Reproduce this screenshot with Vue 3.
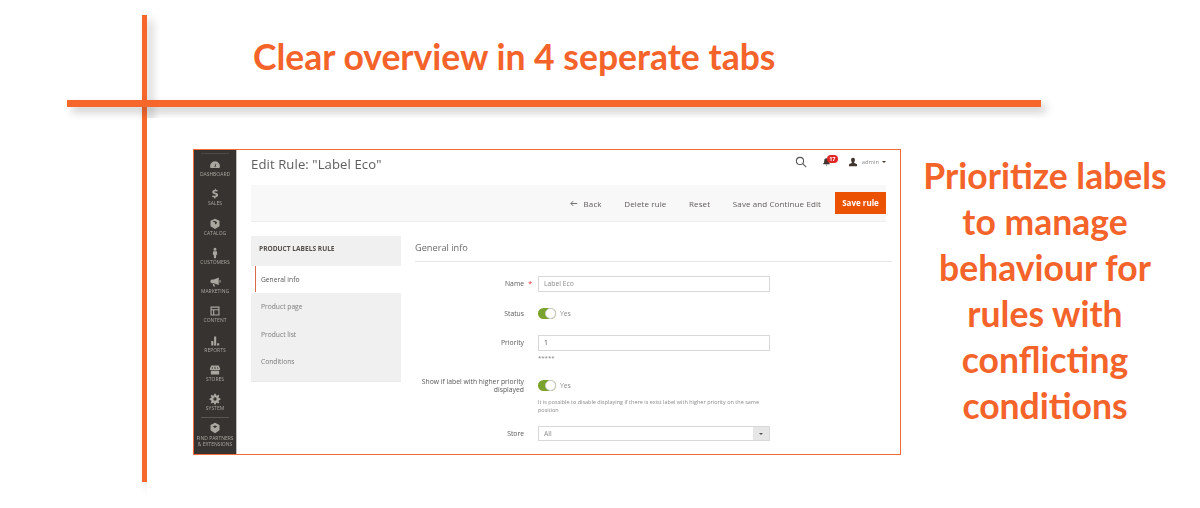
<script setup>
const nav = [
  { label: 'Dashboard', icon: 'M2 12a6.500 6.500 0 1 1 12 0zM7.200 10.500l1.800-4.500.6.500-1 4.600z' },
  { label: 'Sales', icon: 'M8 1v1.400c-2.400.2-3.600 1.400-3.600 3 0 3.600 5 2.400 5 4 0 .7-.7 1-1.800 1-1 0-2-.3-2.800-.8l-.6 2c.8.5 1.800.8 2.800.9V14h1.600v-1.500c2.300-.3 3.500-1.500 3.500-3.200 0-3.600-5-2.500-5-4 0-.6.6-.9 1.500-.9.900 0 1.700.2 2.400.6l.6-2c-.7-.4-1.500-.6-2.500-.7V1z' },
  { label: 'Catalog', icon: 'M8 1l6 2.500V11l-6 3.500L2 11V3.500zM4.500 4.200L8 6v2.500L10.500 7V5.300L7 3.500z' },
  { label: 'Customers', icon: 'M8 1a2 2 0 1 1 0 4 2 2 0 0 1 0-4zM5.500 5.800h5l.5 4.200-1.300.3-.4 4.700H6.700l-.4-4.700L5 10z' },
  { label: 'Marketing', icon: 'M13 2v10L6.500 9.800H3.500L2 8.500V6l1.500-1.500h3zM14 5.500h1.500v3H14zM5 10.500h2l1 3.500H6z' },
  { label: 'Content', icon: 'M2 2h12v12H2zM3.500 3.500v2h9v-2zM3.500 7v5.500h2V7zM7 7v5.500h5.500V7z' },
  { label: 'Reports', icon: 'M3 8h2.800v6H3zM6.800 2h2.800v12H6.800zM10.800 11h2.800v3h-2.800z' },
  { label: 'Stores', icon: 'M3 2h10l2 4.500c0 1-1 1.500-1.800 1.500H2.800C2 8 1 7.500 1 6.500zM2.500 9h11v5h-11zM4.500 3.500l-1 3h1l.7-3zM7.500 3.500l-.2 3h1.400l-.2-3zM10.800 3.500l.7 3h1l-1-3z' },
  { label: 'System', icon: 'M7 1h2l.4 2 1.300.5 1.700-1.100 1.400 1.400-1.100 1.700.5 1.300 2 .4v2l-2 .4-.5 1.300 1.100 1.700-1.400 1.400-1.700-1.100-1.300.5-.4 2H7l-.4-2-1.300-.5-1.700 1.100-1.400-1.400 1.100-1.700-.5-1.300-2-.4v-2l2-.4.5-1.300L2.200 3.800l1.400-1.400 1.700 1.100L6.600 3zM8 5.800a2.200 2.200 0 1 0 0 4.400 2.200 2.200 0 0 0 0-4.400z' }
]
const tabs = ['Product page', 'Product list', 'Conditions']
const headline = ['Prioritize labels', 'to manage', 'behaviour for', 'rules with', 'conflicting', 'conditions']
</script>

<template>
  <div class="page">
    <span class="rule-v"></span>
    <span class="rule-h"></span>
    <span class="cover"></span>
    <h1 class="title">Clear overview in 4 seperate tabs</h1>
    <div class="row">
      <section class="frame">
        <aside class="sidebar">
          <span class="logo-line"></span>
          <div v-for="item in nav" :key="item.label" class="nav-item">
            <svg viewBox="0 0 16 16" class="nav-icon"><path :d="item.icon" fill-rule="evenodd" /></svg>
            <span>{{ item.label }}</span>
          </div>
          <span class="nav-sep"></span>
          <div class="nav-item partners">
            <svg viewBox="0 0 16 16" class="nav-icon"><path d="M8 1l6 3v7l-6 4-6-4V4zM5 6l3 2 3-2-3-1.500z" fill-rule="evenodd" /></svg>
            <span>Find Partners<br />&amp; Extensions</span>
          </div>
        </aside>
        <div class="strip"></div>
        <div class="main">
          <header class="top">
            <h2>Edit Rule: "Label Eco"</h2>
            <div class="tools">
              <svg class="search" viewBox="0 0 14 14"><circle cx="5.800" cy="5.800" r="4.200" /><path d="M9 9l4 4" /></svg>
              <div class="bell">
                <svg viewBox="0 0 12 12"><path d="M6 1c2.200 0 3 1.600 3 3.500 0 2 .8 3 1.500 3.800v.7h-9v-.7C2.200 7.500 3 6.500 3 4.500 3 2.600 3.800 1 6 1zM4.800 9.800h2.400L6 11z" /></svg>
                <b>17</b>
              </div>
              <div class="user">
                <svg viewBox="0 0 12 12"><path d="M6 .8c1.500 0 2.300 1 2.300 2.500S7.500 6.400 7.200 7l3.600 1.800V11H1.200V8.800L4.800 7c-.3-.6-1.100-2.200-1.100-3.700S4.500.8 6 .8z" /></svg>
                <span>admin</span>
                <i class="caret"></i>
              </div>
            </div>
          </header>
          <div class="actions">
            <span class="action back"><svg viewBox="0 0 10 8"><path d="M9 4H1.500M4 1L1 4l3 3" /></svg>Back</span>
            <span class="action">Delete rule</span>
            <span class="action">Reset</span>
            <span class="action">Save and Continue Edit</span>
            <span class="save">Save rule</span>
          </div>
          <div class="body">
            <nav class="tabs">
              <div class="tabs-head">PRODUCT LABELS RULE</div>
              <div class="tab-first"><div class="tab active">General info</div></div>
              <div class="tab-rest">
                <div v-for="tab in tabs" :key="tab" class="tab">{{ tab }}</div>
              </div>
            </nav>
            <div class="form">
              <div class="form-title">General info</div>
              <div class="field f-name">
                <label>Name<em>*</em></label>
                <div class="control input">Label Eco</div>
              </div>
              <div class="field f-status">
                <label>Status</label>
                <div class="toggle-row"><span class="toggle"><i></i></span><span>Yes</span></div>
              </div>
              <div class="field f-priority">
                <label>Priority</label>
                <div class="stack">
                  <div class="control input dark">1</div>
                  <div class="stars">*****</div>
                </div>
              </div>
              <div class="field f-show">
                <label>Show if label with higher priority displayed</label>
                <div class="stack">
                  <div class="toggle-row lowered"><span class="toggle"><i></i></span><span>Yes</span></div>
                  <p class="note">It is possible to disable displaying if there is exist label with higher priority on the same position</p>
                </div>
              </div>
              <div class="field f-store">
                <label>Store</label>
                <div class="control select"><span>All</span><b><i></i></b></div>
              </div>
            </div>
          </div>
        </div>
      </section>
      <div class="side-copy">
        <div v-for="line in headline" :key="line">{{ line }}</div>
      </div>
    </div>
  </div>
</template>

<style>
html, body { margin: 0; background: #fff; }
</style>

<style scoped>
.page {
  position: relative;
  width: 1200px;
  height: 508px;
  overflow: hidden;
  background: #fff;
  font-family: "Open Sans", "Liberation Sans", sans-serif;
}
.rule-v, .rule-h {
  position: absolute;
  background: #f6672c;
  box-shadow: 5px 5px 9px rgba(40, 40, 40, .26);
}
.rule-v { left: 142px; top: 15px; width: 5px; height: 467px; }
.rule-h { left: 67px; top: 100px; width: 974px; height: 7px; }
.cover { position: absolute; left: 147px; top: 118px; width: 1053px; height: 390px; background: #fff; }
.title {
  position: relative;
  margin: 0;
  padding: 35px 0 0 253px;
  height: 149px;
  box-sizing: border-box;
  font: 700 35.500px/44px Lato, sans-serif;
  color: #f4632a;
  white-space: nowrap;
}
.row { position: relative; display: flex; align-items: flex-start; padding-left: 193px; }
.frame {
  position: relative;
  display: flex;
  width: 708px;
  height: 306px;
  box-sizing: border-box;
  border: 1px solid #f26a35;
  background: #fff;
}
.sidebar {
  width: 42px;
  height: 100%;
  flex: none;
  background: #373330;
  color: #aaa6a0;
  display: flex;
  flex-direction: column;
  align-items: center;
  font-size: 5px;
  line-height: 6px;
  text-transform: uppercase;
  text-align: center;
  filter: blur(.3px);
}
.logo-line { width: 28px; height: 1px; background: #4d4945; margin: 3px 0 2px; flex: none; }
.nav-item { height: 29.300px; flex: none; display: flex; flex-direction: column; align-items: center; white-space: nowrap; }
.nav-icon { width: 12px; height: 12px; margin-top: 3px; margin-bottom: 0; fill: #aaa6a0; }
.nav-sep { width: 28px; height: 1px; background: #5a5651; margin-top: -3px; flex: none; }
.partners { height: auto; line-height: 6.500px; }
.partners .nav-icon { margin-top: 4px; margin-bottom: 1px; }
.strip { width: 1px; background: #bdbdbd; flex: none; }
.main { flex: 1; min-width: 0; padding: 0 8px 0 14px; filter: blur(.3px); }
.top { height: 28px; margin-bottom: 7px; display: flex; align-items: center; justify-content: space-between; padding-right: 6px; }
.top h2 { margin: 0; font-size: 13.100px; font-weight: 400; color: #5d5d5d; letter-spacing: .1px; }
.tools { display: flex; align-items: center; margin-top: -5px; }
.search { width: 12px; height: 12px; fill: none; stroke: #555; stroke-width: 1.200; margin-right: 15px; }
.bell { position: relative; width: 17px; height: 11px; margin-right: 9px; }
.bell svg { width: 9px; height: 10px; fill: #41362f; position: absolute; left: 0; top: 1px; }
.bell b { position: absolute; left: 5px; top: -1px; width: 11px; height: 8px; border-radius: 4px; background: #e22626; color: #fff; font-size: 5.500px; line-height: 8px; text-align: center; }
.user { display: flex; align-items: center; font-size: 5.800px; color: #8a8a8a; }
.user svg { width: 10px; height: 10px; fill: #41362f; margin-right: 4px; }
.caret { margin-left: 3px; border: 2px solid transparent; border-top: 2.500px solid #41362f; border-bottom: 0; }
.actions {
  height: 37px;
  margin-top: 1px;
  margin-right: 6px;
  background: #f8f8f8;
  border-bottom: 1px solid #eee;
  box-sizing: border-box;
  display: flex;
  align-items: center;
  justify-content: flex-end;
  font-size: 8px;
  color: #5f5b58;
  letter-spacing: .1px;
}
.action { margin-right: 22.700px; white-space: nowrap; }
.action:nth-child(4) { margin-right: 14px; }
.back { display: flex; align-items: center; }
.back svg { width: 8px; height: 7px; margin-right: 6px; fill: none; stroke: #4d4d4d; stroke-width: 1; }
.save {
  width: 51px;
  height: 22px;
  line-height: 22px;
  text-align: center;
  background: #eb5202;
  color: #fff;
  font-weight: 700;
  letter-spacing: 0;
}
.body { display: flex; margin-top: 14px; }
.tabs { width: 150px; flex: none; margin-right: 14px; font-size: 6.700px; color: #7b7b7b; }
.tabs-head {
  height: 30px;
  line-height: 26px;
  padding-left: 8px;
  background: #f0f0f0;
  font-size: 6.600px;
  font-weight: 700;
  color: #55504c;
}
.tab { height: 27.400px; line-height: 28px; padding-left: 10px; }
.tab-first { padding-left: 4px; }
.tab.active { color: #565656; border-left: 1px solid #d9694a; padding-left: 5px; height: 26px; margin-bottom: 1.400px; }
.tab-rest { background: #f0f0f0; border-bottom: 1px solid #e8e8e8; padding-bottom: 5px; }
.form { flex: 1; min-width: 0; }
.form-title { height: 25px; line-height: 23px; border-bottom: 1px solid #e6e6e6; font-size: 9.200px; color: #6a6a6a; }
.field { display: flex; align-items: flex-start; font-size: 6.800px; color: #595959; }
.field label { width: 109px; flex: none; text-align: right; line-height: 8px; padding-top: 4px; position: relative; font-weight: 400; }
.field label em { position: absolute; right: -8px; top: 4px; color: #e22626; font-style: normal; font-size: 7px; }
.field .control, .field .stack, .field .toggle-row { margin-left: 14px; }
.stack { width: 232px; }
.stack .control, .stack .toggle-row { margin-left: 0; }
.stack .lowered { margin-top: 6px; }
.f-name { margin-top: 14px; }
.f-status { margin-top: 16px; }
.f-status label { padding-top: 2px; }
.f-priority { margin-top: 16px; }
.f-show { margin-top: 12px; }
.f-store { margin-top: 12px; }
.control {
  width: 232px;
  height: 16px;
  box-sizing: border-box;
  border: 1px solid #d8d8d8;
  background: #fff;
  line-height: 14px;
  padding-left: 5px;
  color: #8c8c8c;
}
.control.dark { color: #555; }
.select { display: flex; justify-content: space-between; padding-right: 0; height: 15px; line-height: 13px; }
.select b { width: 16px; background: #e6e6e6; display: flex; align-items: center; justify-content: center; }
.select i { border: 2px solid transparent; border-top: 2.500px solid #555; border-bottom: 0; }
.toggle-row { display: flex; align-items: center; color: #8c8c8c; line-height: 11px; }
.toggle { position: relative; display: block; width: 18px; height: 11px; border-radius: 6px; background: #79a22e; margin-right: 4px; }
.toggle i { position: absolute; right: 0; top: 0; width: 11px; height: 11px; border: .75px solid #cfcfcf; box-sizing: border-box; border-radius: 50%; background: #fff; }
.stars { font-size: 6px; line-height: 7px; margin-top: 4px; color: #777; }
.note { margin: 7px 0 0; font-size: 5.500px; line-height: 8px; color: #8a8a8a; width: 232px; }
.side-copy {
  width: 288px;
  margin-top: 4px;
  text-align: center;
  font: 700 35.500px/46px Lato, sans-serif;
  color: #f4632a;
  white-space: nowrap;
}
</style>
